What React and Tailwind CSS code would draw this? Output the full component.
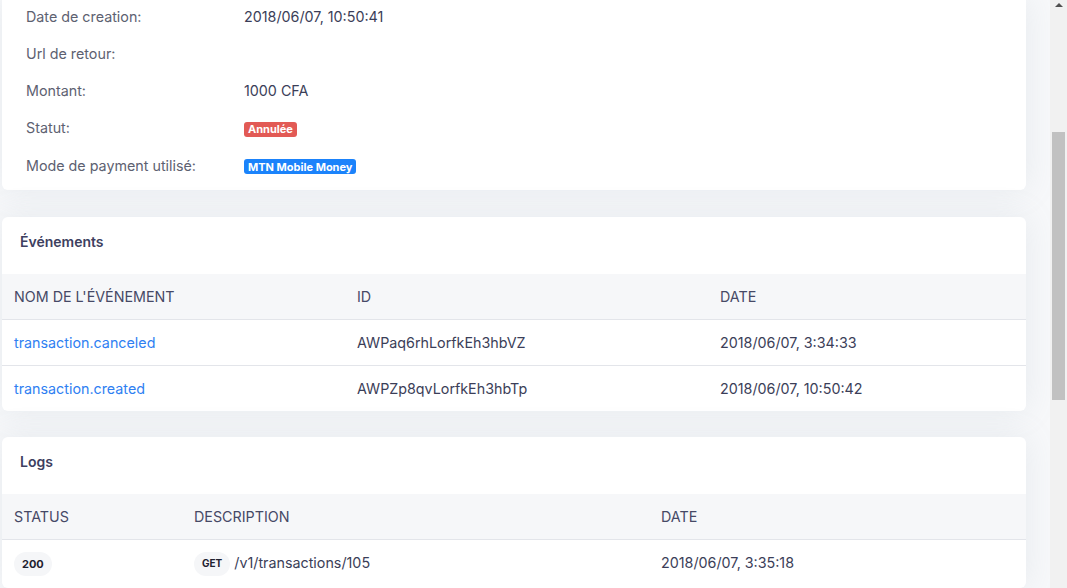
import React from 'react'

const details = [
    { label: 'Date de creation:', value: '2018/06/07, 10:50:41' },
    { label: 'Url de retour:', value: '' },
    { label: 'Montant:', value: '1000 CFA' },
    {
        label: 'Statut:',
        value: (
            <span className="inline-flex h-[15px] items-center rounded-[3px] bg-[#e25a55] px-[4px] text-[11px] font-bold text-white">
                Annulée
            </span>
        ),
    },
    {
        label: 'Mode de payment utilisé:',
        value: (
            <span className="inline-flex h-[15px] items-center rounded-[3px] bg-[#1b83fb] px-[4px] text-[11px] font-bold text-white">
                MTN Mobile Money
            </span>
        ),
    },
]

const events = [
    { name: 'transaction.canceled', id: 'AWPaq6rhLorfkEh3hbVZ', date: '2018/06/07, 3:34:33' },
    { name: 'transaction.created', id: 'AWPZp8qvLorfkEh3hbTp', date: '2018/06/07, 10:50:42' },
]

function Card({ title, children }) {
    return (
        <div className="mb-[26px] overflow-hidden rounded-md bg-white shadow-[0_0_2rem_0_rgba(136,152,170,0.15)]">
            <div className="h-[57px] px-[18px] pt-[15px] text-[14px] font-semibold leading-5 text-[#3d4060]">
                {title}
            </div>
            {children}
        </div>
    )
}

export default function App() {
    return (
        <div
            className="flex h-[588px] overflow-hidden bg-[#f7f8fa] text-[14.3px]"
            style={{ fontFamily: 'Inter, "Noto Sans", sans-serif' }}
        >
            <div className="flex-1 pl-[2px] pr-[24px]">
                {/* Transaction details */}
                <div className="mb-[27px] -mt-[2px] rounded-b-md bg-white pb-[6px] shadow-[0_0_2rem_0_rgba(136,152,170,0.15)]">
                    {details.map((row) => (
                        <div key={row.label} className="flex h-[37.2px] items-center">
                            <div className="w-[242px] pl-[24px] text-[#5d6171]">{row.label}</div>
                            <div className="text-[#3b3e58]">{row.value}</div>
                        </div>
                    ))}
                </div>

                {/* Events */}
                <Card title="Événements">
                    <div className="grid h-[46px] grid-cols-[355px_363px_1fr] items-center border-b border-[#e3e5ea] bg-[#f6f7f9] pt-[1px] text-[#464966]">
                        <div className="pl-[12px]">NOM DE L'ÉVÉNEMENT</div>
                        <div>ID</div>
                        <div>DATE</div>
                    </div>
                    {events.map((ev, i) => (
                        <div
                            key={ev.id}
                            className={`grid grid-cols-[355px_363px_1fr] items-center pt-[1px] text-[#3b3e58] ${i === 0 ? 'h-[46px] border-b border-[#e3e5ea]' : 'h-[45px]'}`}
                        >
                            <div className="pl-[12px] text-[#2f7ff2]">{ev.name}</div>
                            <div>{ev.id}</div>
                            <div>{ev.date}</div>
                        </div>
                    ))}
                </Card>

                {/* Logs */}
                <Card title="Logs">
                    <div className="grid h-[46px] grid-cols-[192px_467px_1fr] items-center border-b border-[#e3e5ea] bg-[#f6f7f9] pt-[1px] text-[#464966]">
                        <div className="pl-[12px]">STATUS</div>
                        <div>DESCRIPTION</div>
                        <div>DATE</div>
                    </div>
                    <div className="grid h-[48px] grid-cols-[192px_467px_1fr] items-center text-[#3b3e58]">
                        <div className="pl-[12px]">
                            <span className="inline-flex h-[24px] items-center rounded-full bg-[#f5f6f8] px-[8px] text-[11px] font-bold text-[#1f2230]">
                                200
                            </span>
                        </div>
                        <div className="flex items-center gap-[4px]">
                            <span className="inline-flex h-[24px] items-center rounded-full bg-[#f5f6f8] px-[8px] text-[10px] font-bold text-[#1f2230]">
                                GET
                            </span>
                            <span className="-mt-[2px]">/v1/transactions/105</span>
                        </div>
                        <div className="-mt-[2px]">2018/06/07, 3:35:18</div>
                    </div>
                </Card>
            </div>

            {/* Scrollbar */}
            <div className="flex w-[17px] flex-col items-center bg-[#f1f1f1]">
                <div className="mt-[3px] h-0 w-0 border-x-[4px] border-b-[4px] border-x-transparent border-b-[#505050]" />
                <div className="mt-[125px] h-[268px] w-[13px] bg-[#c1c1c1]" />
            </div>
        </div>
    )
}
